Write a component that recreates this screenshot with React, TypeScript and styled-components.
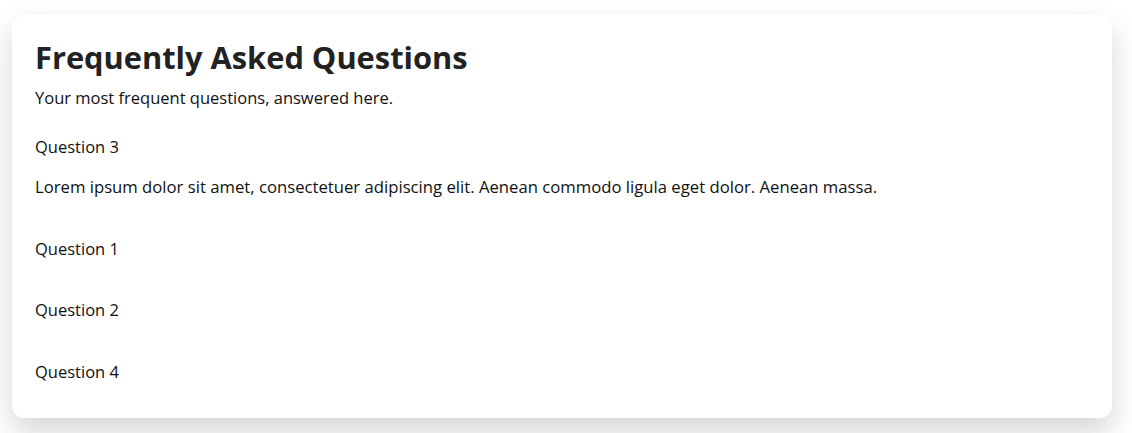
import React, { useState } from "react";
import styled, { createGlobalStyle } from "styled-components";

const Global = createGlobalStyle`
  html, body { margin: 0; padding: 0; background: #ffffff; }
  body { font-family: "Open Sans", "Noto Sans", sans-serif; color: #111; }
  * { box-sizing: border-box; }
`;

const Page = styled.div`
  padding: 15px 20px 15px 12px;
`;

const Card = styled.section`
  background: #fff;
  border-radius: 12px;
  box-shadow: 0 14px 30px rgba(0, 0, 0, 0.17);
  padding: 18px 23px 26px;
`;

const Title = styled.h1`
  margin: 0;
  font-size: 30.8px;
  font-weight: 700;
  line-height: 48px;
  color: #222;
`;

const Subtitle = styled.p`
  margin: 5px 0 17px;
  font-size: 16.5px;
  line-height: 24px;
`;

const Item = styled.div`
  & + & {
    margin-top: 21.5px;
  }
`;

const Question = styled.button`
  display: block;
  width: 100%;
  text-align: left;
  background: none;
  border: 0;
  padding: 8px 0;
  font: inherit;
  font-size: 16.5px;
  line-height: 24px;
  color: #111;
  cursor: pointer;
`;

const Answer = styled.p`
  margin: 0;
  padding: 8px 0;
  font-size: 16.7px;
  line-height: 24px;
`;

const items = [
  { q: "Question 3", a: "Lorem ipsum dolor sit amet, consectetuer adipiscing elit. Aenean commodo ligula eget dolor. Aenean massa." },
  { q: "Question 1", a: "Lorem ipsum dolor sit amet." },
  { q: "Question 2", a: "Lorem ipsum dolor sit amet." },
  { q: "Question 4", a: "Lorem ipsum dolor sit amet." },
];

export default function App() {
  const [open, setOpen] = useState(0);
  return (
    <>
      <Global />
      <Page>
        <Card>
          <Title>Frequently Asked Questions</Title>
          <Subtitle>Your most frequent questions, answered here.</Subtitle>
          {items.map((it, i) => (
            <Item key={it.q}>
              <Question onClick={() => setOpen(open === i ? -1 : i)}>{it.q}</Question>
              {open === i && <Answer>{it.a}</Answer>}
            </Item>
          ))}
        </Card>
      </Page>
    </>
  );
}
